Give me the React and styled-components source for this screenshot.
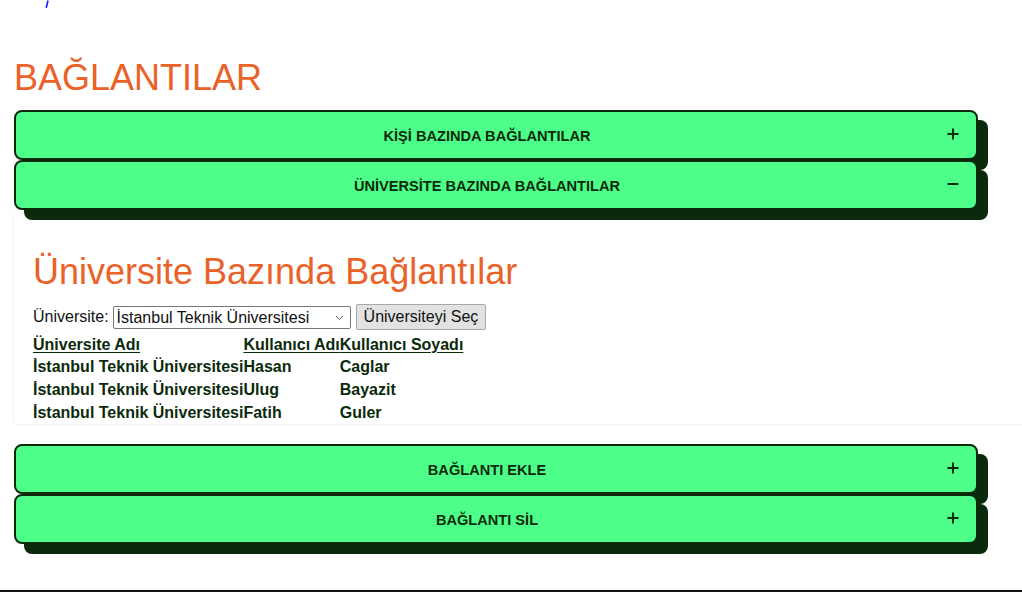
import React, { useState } from 'react'
import styled, { createGlobalStyle } from 'styled-components'

const GlobalStyle = createGlobalStyle`
    html, body {
        margin: 0;
        padding: 0;
        background: #ffffff;
        font-family: "Liberation Sans", Arial, sans-serif;
        overflow: hidden;
    }
`;

const rows = [
    { uni: 'İstanbul Teknik Üniversitesi', ad: 'Hasan', soyad: 'Caglar' },
    { uni: 'İstanbul Teknik Üniversitesi', ad: 'Ulug', soyad: 'Bayazit' },
    { uni: 'İstanbul Teknik Üniversitesi', ad: 'Fatih', soyad: 'Guler' }
]

const Plus = () => (
    <svg width="14" height="14" viewBox="0 0 14 14">
        <path d="M7 1.5v11M1.5 7h11" stroke="#0b2a0b" strokeWidth="2" />
    </svg>
)

const Minus = () => (
    <svg width="14" height="14" viewBox="0 0 14 14">
        <path d="M1.5 7h11" stroke="#0b2a0b" strokeWidth="2" />
    </svg>
)

const AccordionItem = ({ title, open, onToggle, children }) => {
    return (
        <Item>
            <Header type="button" onClick={onToggle}>
                <span>{title}</span>
                <IconBox>{open ? <Minus /> : <Plus />}</IconBox>
            </Header>
            {open && children}
        </Item>
    )
}

const UniversityPanel = () => (
    <Panel>
        <SubTitle>Üniversite Bazında Bağlantılar</SubTitle>
        <Form onSubmit={(e) => e.preventDefault()}>
            <label htmlFor="uni">Üniversite:</label>
            <SelectWrap>
                <Select id="uni" defaultValue="itu">
                    <option value="itu">İstanbul Teknik Üniversitesi</option>
                    <option value="bou">Boğaziçi Üniversitesi</option>
                </Select>
                <Chevron width="9" height="6" viewBox="0 0 9 6">
                    <path d="M1 1l3.5 3.5L8 1" fill="none" stroke="#555" strokeWidth="1" />
                </Chevron>
            </SelectWrap>
            <SelectButton type="submit">Üniversiteyi Seç</SelectButton>
        </Form>
        <Table>
            <thead>
                <tr>
                    <th>Üniversite Adı</th>
                    <th>Kullanıcı Adı</th>
                    <th>Kullanıcı Soyadı</th>
                </tr>
            </thead>
            <tbody>
                {rows.map((r, i) => (
                    <tr key={i}>
                        <td>{r.uni}</td>
                        <td>{r.ad}</td>
                        <td>{r.soyad}</td>
                    </tr>
                ))}
            </tbody>
        </Table>
    </Panel>
)

const App = () => {
    const [open, setOpen] = useState(1)
    const toggle = (i) => setOpen(open === i ? -1 : i)

    return (
        <Page>
            <GlobalStyle />
            <TopMark>
                <svg width="4" height="9" viewBox="0 0 4 9">
                    <path d="M3 0.5L1.2 8" stroke="#1a1aff" strokeWidth="1.6" />
                </svg>
            </TopMark>
            <Title>BAĞLANTILAR</Title>
            <Group>
                <AccordionItem title="KİŞİ BAZINDA BAĞLANTILAR" open={open === 0} onToggle={() => toggle(0)}>
                    <Panel />
                </AccordionItem>
                <AccordionItem title="ÜNİVERSİTE BAZINDA BAĞLANTILAR" open={open === 1} onToggle={() => toggle(1)}>
                    <UniversityPanel />
                </AccordionItem>
            </Group>
            <Group $spaced>
                <AccordionItem title="BAĞLANTI EKLE" open={open === 2} onToggle={() => toggle(2)} />
                <AccordionItem title="BAĞLANTI SİL" open={open === 3} onToggle={() => toggle(3)} />
            </Group>
            <Footer />
        </Page>
    )
}

const Page = styled.div`
    padding-left: 14px;
    min-height: 592px;
    display: flex;
    flex-direction: column;
`;

const TopMark = styled.div`
    height: 9px;
    padding: 0 0 0 31px;
    line-height: 0;
`;

const Title = styled.h1`
    margin: 47px 0 0;
    color: #ea6228;
    font-size: 36px;
    font-weight: 400;
    line-height: 44px;
`;

const Group = styled.div`
    display: flex;
    flex-direction: column;
    margin-top: ${({ $spaced }) => ($spaced ? '20px' : '10px')};
`;

const Item = styled.div`
    display: flex;
    flex-direction: column;
`;

const Header = styled.button`
    position: relative;
    z-index: 1;
    display: flex;
    align-items: center;
    width: calc(100% - 44px);
    height: 50px;
    margin: 0;
    padding: 2px 16px 0 12px;
    background: #4dff88;
    border: 2px solid #0b2a0b;
    border-radius: 8px;
    box-shadow: 10px 10px 0 #0b2a0b;
    cursor: pointer;
    font-family: "Liberation Sans", Arial, sans-serif;
    font-size: 14.6px;
    font-weight: 700;
    color: #0b2a0b;

    span {
        flex: 1;
        text-align: center;
    }
`;

const IconBox = styled.span`
    && {
        flex: 0 0 auto;
        display: flex;
        align-items: center;
        margin-top: -4px;
    }
`;

const Panel = styled.div`
    background: #fff;
    padding: 41px 19px 0;
    box-shadow: 0 1px 3px rgba(0, 0, 0, 0.08);
    border-radius: 0 0 4px 4px;
    margin-right: -6px;
`;

const SubTitle = styled.h2`
    margin: 0 0 10px;
    color: #ea6228;
    font-size: 36px;
    font-weight: 400;
    line-height: 42px;
`;

const Form = styled.form`
    display: flex;
    align-items: center;
    gap: 5px;
    font-size: 16px;
    color: #111;
    height: 28px;

    label {
        margin-right: -1px;
    }
`;

const SelectWrap = styled.div`
    position: relative;
    display: flex;
`;

const Select = styled.select`
    appearance: none;
    width: 238px;
    height: 23px;
    font-family: "Liberation Sans", Arial, sans-serif;
    font-size: 16px;
    color: #111;
    border: 1px solid #767676;
    border-radius: 2px;
    background: #fff;
    padding: 0 20px 0 3px;
`;

const Chevron = styled.svg`
    position: absolute;
    right: 7px;
    top: 9px;
    pointer-events: none;
`;

const SelectButton = styled.button`
    height: 26px;
    padding: 0 7px;
    font-family: "Liberation Sans", Arial, sans-serif;
    font-size: 16px;
    color: #111;
    background: #e2e2e2;
    border: 1px solid #a8a8a8;
    border-radius: 2px;
`;

const Table = styled.table`
    border-collapse: collapse;
    border-spacing: 0;
    margin-top: 3px;
    font-size: 16px;
    color: #0b2a0b;

    th, td {
        padding: 0;
        text-align: left;
        font-weight: 700;
        line-height: 23px;
        white-space: nowrap;
    }

    th {
        text-decoration: underline;
        text-underline-offset: 2px;
        line-height: 21px;
    }
`;

const Footer = styled.footer`
    margin-top: auto;
    margin-left: -14px;
    border-top: 2px solid #111;
    height: 0;
`;

export default App
